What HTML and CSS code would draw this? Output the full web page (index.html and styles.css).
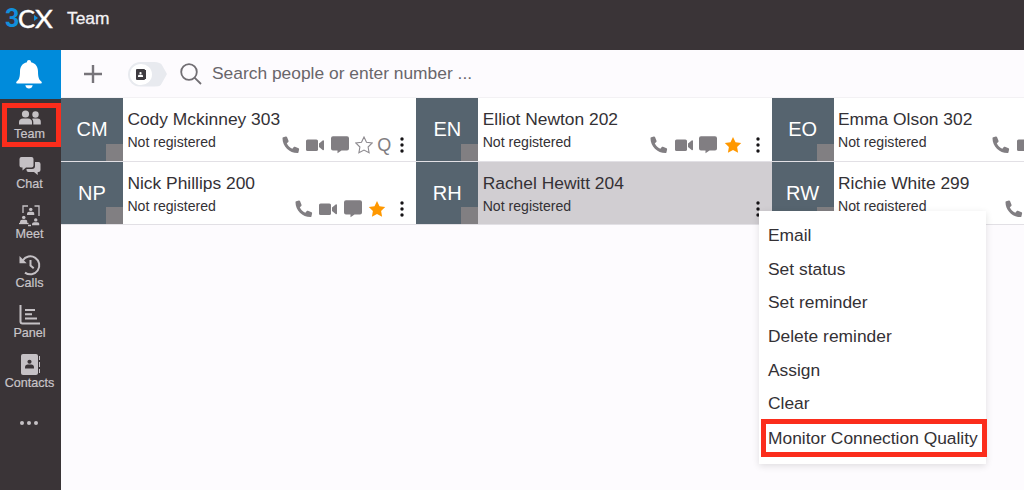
FILE: index.html
```html
<!DOCTYPE html>
<html lang="en">
<head>
<meta charset="UTF-8">
<meta name="viewport" content="width=device-width, initial-scale=1.0">
<title>Team</title>
<link rel="stylesheet" href="styles.css">
</head>
<body>

<!-- shared icons -->
<svg class="defs">
<symbol id="phone" viewBox="0 0 18 18"><path d="M1.200 1.300 3.900.6c.5-.1.900.1 1.100.5l1.500 3.700c.2.4.1.8-.2 1.100L4.800 7.200c1 2.500 3 4.500 5.500 5.500l1.500-1.700c.3-.3.7-.4 1.100-.2l3.700 1.500c.4.2.6.6.5 1.100l-.7 3c-.1.4-.4.7-.9.7C7.400 17.100.5 10.300.5 2.200c0-.4.3-.8.7-.9z"/></symbol>
<symbol id="video" viewBox="0 0 18 18"><rect x="0" y="3.500" width="12" height="11.500" rx="1.600"/><path d="M13 7.500 16.700 4.500c.5-.4 1.300-.1 1.300.6v8.400c0 .7-.8 1-1.300.6L13 11.100z"/></symbol>
<symbol id="chat" viewBox="0 0 18 18"><path d="M2 .3h14a2 2 0 0 1 2 2v10.200a2 2 0 0 1-2 2h-5.500L6.500 17.300v-2.800H2a2 2 0 0 1-2-2V2.300a2 2 0 0 1 2-2z"/></symbol>
<symbol id="star" viewBox="0 0 18 18"><path d="m9 1 2.500 5.200 5.700.8-4.100 4 1 5.700L9 14l-5.100 2.700 1-5.700-4.100-4 5.700-.8z"/></symbol>
<symbol id="dots" viewBox="0 0 4 16"><circle cx="2" cy="2" r="1.700"/><circle cx="2" cy="8" r="1.700"/><circle cx="2" cy="14" r="1.700"/></symbol>
<symbol id="user" viewBox="0 0 10 10"><circle cx="5" cy="2.500" r="2.300"/><path d="M0 10V8.500C0 6.500 1.400 5.600 3 5.600h4c1.600 0 3 .9 3 2.900V10z"/></symbol>
</svg>

<header class="header">
<div class="logo"><span class="logo-3">3</span><span class="logo-c">C</span><span class="logo-x">X</span><svg class="logo-arrow" viewBox="0 0 4 6"><path d="M0 0 4 3 0 6z"/></svg></div>
<h1>Team</h1>
</header>

<div class="layout">
<nav class="sidebar">
<a class="bell">
<svg width="26" height="29" viewBox="0 0 26 29"><path d="M13 0c1.300 0 2 .9 2 2.200 4.600 1 7 4.400 7 9.300 0 6 1 8.200 3.300 10 .9.700.5 2-.7 2H1.400c-1.200 0-1.600-1.300-.7-2C3 19.700 4 17.500 4 11.500c0-4.900 2.400-8.300 7-9.300C11 .9 11.700 0 13 0zM9.300 25.200h7.400c-.3 2-1.800 3.300-3.700 3.300s-3.400-1.300-3.700-3.300z"/></svg>
</a>
<a class="nav-item active">
<svg width="22" height="18" viewBox="0 0 22 18"><circle cx="6.500" cy="5" r="3.600"/><path d="M0 15.500V13c0-2.300 1.700-3.500 4-3.500h5c2.300 0 4 1.200 4 3.500v2.500z"/><circle cx="16.500" cy="5.500" r="3.200"/><path d="M14.300 15.500V13c0-1.300-.4-2.300-1.200-3.100.4-.2.9-.3 1.400-.3h4c2 0 3.300 1.200 3.300 3.200v2.700z"/></svg>
<span>Team</span>
</a>
<a class="nav-item">
<svg width="22" height="20" viewBox="0 0 22 20"><path d="M2.500 0h10A2 2 0 0 1 14.500 2v6.500a2 2 0 0 1-2 2H7L3.500 13.500v-3h-1a2 2 0 0 1-2-2V2a2 2 0 0 1 2-2z"/><path d="M16 5h3.500a2 2 0 0 1 2 2v6a2 2 0 0 1-2 2h-.8v3L15 15H9.500a2 2 0 0 1-2-2v-1h5.500a3 3 0 0 0 3-3z"/></svg>
<span>Chat</span>
</a>
<a class="nav-item">
<svg width="22" height="22" viewBox="0 0 22 22"><path class="line thin" d="M4 8V1h5M15.500 1H20v10M9 20.500h3"/><use href="#user" x="8" y="2.500" width="7.500" height="7.500"/><use href="#user" x="1" y="10.500" width="7.500" height="7.500"/><use href="#user" x="13" y="13" width="7.500" height="7.500"/><path class="line thin" d="M0 18.500h9.500"/></svg>
<span>Meet</span>
</a>
<a class="nav-item">
<svg width="22" height="22" viewBox="0 0 22 22"><path class="line" d="M3.700 6.500A9 9 0 1 1 6 18.600"/><path d="M.5 2v7.200h7.200z"/><path class="line" d="M11.500 6v5.500l3.200 2.700"/></svg>
<span>Calls</span>
</a>
<a class="nav-item">
<svg width="22" height="21" viewBox="0 0 22 21"><path class="line" d="M1.500 0v16.500a2 2 0 0 0 2 2H21M6 5h10M6 9.200h7M6 13.400h12"/></svg>
<span>Panel</span>
</a>
<a class="nav-item">
<svg width="22" height="22" viewBox="0 0 22 22"><rect x="2" y="0" width="17" height="21" rx="2"/><path d="M20 2h1v4h-1zM20 8h1v5h-1zM20 15h1v4h-1z"/><g class="dark"><use href="#user" x="6" y="5" width="9" height="10"/></g></svg>
<span>Contacts</span>
</a>
<a class="more"><i></i><i></i><i></i></a>
</nav>

<main class="main">
<div class="toolbar">
<svg class="plus" width="18" height="18" viewBox="0 0 18 18"><path d="M9 0v18M0 9h18"/></svg>
<div class="toggle"><div class="knob"><svg width="10" height="11" viewBox="0 0 10 11"><rect width="9" height="11" rx="1"/><path d="M9 1h1v9H9z"/><g class="light"><use href="#user" x="2" y="2.500" width="5" height="6"/></g></svg></div></div>
<svg class="search" width="22" height="22" viewBox="0 0 22 22"><circle cx="9" cy="9" r="7.800"/><path d="m14.500 14.700 6.500 6.300"/></svg>
<span class="placeholder">Search people or enter number ...</span>
</div>

<div class="people">
<div class="card">
<div class="avatar">CM</div>
<div class="info">
<div class="name">Cody Mckinney 303</div>
<div class="state">Not registered</div>
<div class="actions"><svg><use href="#phone"/></svg><svg><use href="#video"/></svg><svg><use href="#chat"/></svg><svg class="empty"><use href="#star"/></svg><b>Q</b><svg class="dots"><use href="#dots"/></svg></div>
</div>
</div>
<div class="card">
<div class="avatar">EN</div>
<div class="info">
<div class="name">Elliot Newton 202</div>
<div class="state">Not registered</div>
<div class="actions"><svg><use href="#phone"/></svg><svg><use href="#video"/></svg><svg><use href="#chat"/></svg><svg class="fav"><use href="#star"/></svg><svg class="dots"><use href="#dots"/></svg></div>
</div>
</div>
<div class="card">
<div class="avatar">EO</div>
<div class="info">
<div class="name">Emma Olson 302</div>
<div class="state">Not registered</div>
<div class="actions"><svg><use href="#phone"/></svg><svg><use href="#video"/></svg><svg><use href="#chat"/></svg><svg class="empty"><use href="#star"/></svg><b></b><svg class="dots"><use href="#dots"/></svg></div>
</div>
</div>
<div class="card">
<div class="avatar">NP</div>
<div class="info">
<div class="name">Nick Phillips 200</div>
<div class="state">Not registered</div>
<div class="actions"><svg><use href="#phone"/></svg><svg><use href="#video"/></svg><svg><use href="#chat"/></svg><svg class="fav"><use href="#star"/></svg><svg class="dots"><use href="#dots"/></svg></div>
</div>
</div>
<div class="card selected">
<div class="avatar">RH</div>
<div class="info">
<div class="name">Rachel Hewitt 204</div>
<div class="state">Not registered</div>
<div class="actions"><svg class="dots"><use href="#dots"/></svg></div>
</div>
</div>
<div class="card">
<div class="avatar">RW</div>
<div class="info">
<div class="name">Richie White 299</div>
<div class="state">Not registered</div>
<div class="actions"><svg><use href="#phone"/></svg><svg><use href="#video"/></svg><svg><use href="#chat"/></svg><svg class="fav"><use href="#star"/></svg><svg class="dots"><use href="#dots"/></svg></div>
</div>
</div>
</div>
</main>
</div>

<div class="menu">
<div class="menu-item">Email</div>
<div class="menu-item">Set status</div>
<div class="menu-item">Set reminder</div>
<div class="menu-item">Delete reminder</div>
<div class="menu-item">Assign</div>
<div class="menu-item">Clear</div>
<div class="menu-item marked">Monitor Connection Quality</div>
</div>

</body>
</html>
```

FILE: styles.css
```css
* {
box-sizing: border-box;
}
body {
margin: 0;
height: 490px;
overflow: hidden;
font-family: "Liberation Sans", Arial, sans-serif;
font-size: 17.4px;
color: #343135;
background-color: #fdfbfe;
}
svg {
display: block;
flex: none;
}
.defs {
position: absolute;
width: 0;
height: 0;
}
.header {
display: flex;
height: 50px;
padding-left: 5px;
background-color: #3a3437;
color: #f4f2f4;
}
.header h1 {
margin: 8px 0 0 11px;
font-size: 17.4px;
line-height: 20px;
font-weight: normal;
-webkit-text-stroke: 0.3px;
}
.logo {
position: relative;
display: flex;
width: 51px;
height: 36px;
font-family: Lato, sans-serif;
font-size: 25.5px;
line-height: 37px;
color: white;
}
.logo-3 {
width: 13px;
font-family: Roboto, sans-serif;
font-weight: 700;
font-size: 25px;
color: #118fdc;
}
.logo-c {
width: 17px;
-webkit-text-stroke: 0.4px;
}
.logo-x {
-webkit-text-stroke: 0.4px;
transform: scaleX(1.08);
transform-origin: left;
}
.logo-arrow {
position: absolute;
left: 29px;
top: 15px;
width: 4px;
height: 6px;
fill: #118fdc;
}
.layout {
display: flex;
height: 440px;
}
.sidebar {
flex: none;
width: 61px;
background-color: #3a3437;
color: #c9c5c9;
fill: #c5c1c5;
}
.bell {
display: flex;
justify-content: center;
height: 49px;
padding: 10px 3px 0 0;
background-color: #008bdb;
fill: white;
}
.nav-item {
display: flex;
flex-direction: column;
align-items: center;
justify-content: flex-end;
height: 49.8px;
padding: 0 2px 6px 0;
font-size: 12.6px;
line-height: 14px;
-webkit-text-stroke: 0.2px;
}
.nav-item.active {
height: 44px;
margin: 4px 0 0 2px;
padding: 0 4px 1px 0;
border: 5px solid #fb2d1c;
}
.line {
fill: none;
stroke: #c5c1c5;
stroke-width: 2;
}
.thin {
stroke-width: 1.3;
}
.dark {
fill: #3a3437;
}
.light {
fill: white;
}
.more {
display: flex;
gap: 3px;
justify-content: center;
padding: 25px 3px 0 0;
}
.more i {
width: 4px;
height: 4px;
border-radius: 50%;
background-color: #c5c1c5;
}
.main {
flex: 1;
min-width: 0;
overflow: hidden;
}
.toolbar {
display: flex;
align-items: center;
height: 48px;
padding-left: 23px;
box-shadow: inset 0 -1px #f3f1f4;
}
.plus {
stroke: #77747a;
stroke-width: 2.4;
}
.toggle {
width: 39px;
height: 25px;
margin: 0 13px 0 26px;
border-radius: 13px;
background-color: #e8eaef;
clip-path: polygon(0 0, 82% 0, 100% 50%, 82% 100%, 0 100%);
}
.knob {
display: flex;
align-items: center;
justify-content: center;
width: 22px;
height: 21px;
margin: 2px;
border-radius: 50%;
background-color: white;
fill: #3e3b40;
}
.search {
fill: none;
stroke: #716e73;
stroke-width: 1.8;
}
.placeholder {
margin: -2px 0 0 10px;
color: #69666b;
}
.people {
display: grid;
grid-template-columns: repeat(3, 355.3px);
grid-template-rows: 64px 63px;
}
.card {
display: flex;
background-color: white;
border-bottom: 1px solid #e2e0e5;
}
.selected {
background-color: #d1ced2;
}
.avatar {
position: relative;
flex: none;
width: 62px;
font-size: 20px;
line-height: 62px;
text-align: center;
color: white;
background-color: #56646f;
}
.avatar::after {
content: "";
position: absolute;
right: 0;
bottom: 0;
width: 17px;
height: 17px;
background-color: #817f82;
}
.info {
flex: 1;
padding: 11px 12px 0 4.4px;
}
.name {
line-height: 20px;
}
.state {
margin-top: 6px;
font-size: 14.1px;
line-height: 15px;
}
.actions {
display: flex;
justify-content: flex-end;
align-items: center;
height: 20px;
margin-top: -15px;
gap: 6.5px;
fill: #817e82;
}
.actions svg {
width: 18px;
height: 18px;
}
.actions .dots {
width: 4px;
height: 16px;
margin-left: 7.5px;
fill: #151316;
}
.actions .fav {
fill: #ff9800;
}
.actions .empty {
fill: none;
stroke: #8d8a8f;
stroke-width: 1.1;
}
.actions b {
width: 14px;
margin: 0 -5px 0 -2.5px;
font-size: 18px;
font-weight: normal;
color: #817e82;
}
.menu {
position: absolute;
left: 759px;
top: 211px;
width: 227px;
height: 253px;
padding-top: 8px;
background-color: white;
box-shadow: 0 2px 7px rgba(0, 0, 0, 0.12);
}
.menu-item {
height: 33.7px;
padding-left: 9px;
line-height: 33.4px;
white-space: nowrap;
}
.marked {
width: 226px;
height: 38px;
margin: -2px 0 0 2px;
padding-left: 2px;
border: 5px solid #fb2d1c;
line-height: 28px;
}
```
